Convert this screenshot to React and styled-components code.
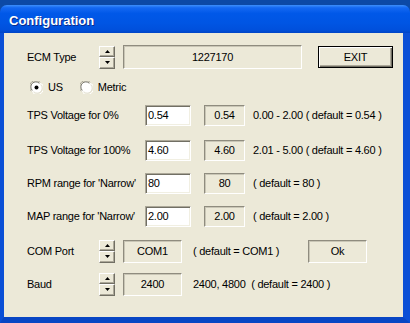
import styled, { createGlobalStyle } from "styled-components";

const GlobalStyle = createGlobalStyle`
  html, body { margin: 0; padding: 0; }
  body {
    width: 410px;
    height: 323px;
    overflow: hidden;
    background: #0c49a6;
    font-family: "Liberation Sans", Arial, sans-serif;
  }
`;

const Window = styled.div`
  margin-top: 5px;
  width: 410px;
  height: 318px;
  display: flex;
  flex-direction: column;
`;

const TitleBar = styled.div`
  height: 28px;
  flex: none;
  box-sizing: border-box;
  border-radius: 7px 7px 0 0;
  background: linear-gradient(
    to bottom,
    #3d8ffc 0%,
    #1468f2 10%,
    #0058e8 30%,
    #0055e3 65%,
    #0050dc 88%,
    #0045c6 100%
  );
  display: flex;
  align-items: center;
  padding: 3px 0 0 9px;
  color: #fff;
  font-weight: bold;
  font-size: 13px;
  text-shadow: 1px 1px 0 #0b2b8c;
`;

const Frame = styled.div`
  flex: 1;
  box-sizing: border-box;
  background: #ece9d8;
  border-left: 4px solid #0a4fd6;
  border-right: 7px solid #0a4fd6;
  border-bottom: 6px solid #0846c4;
  padding: 12px 0 0 23px;
  font-size: 11px;
  letter-spacing: -0.25px;
  color: #000;
`;

const Row = styled.div`
  display: flex;
  align-items: center;
  height: 24px;
  margin-top: ${(p) => p.$mt || 0}px;
`;

const Label = styled.div`
  width: ${(p) => p.$w}px;
  flex: none;
  white-space: nowrap;
`;

const Spinner = styled.div`
  width: 16px;
  height: 23px;
  flex: none;
  display: flex;
  flex-direction: column;
  margin-right: 8px;
`;

const SpinBtn = styled.div`
  flex: 1;
  box-sizing: border-box;
  background: #ece9d8;
  border: 1px solid;
  border-color: #fff #716f64 #716f64 #fff;
  box-shadow: inset -1px -1px 0 #aca899;
  display: flex;
  align-items: center;
  justify-content: center;
`;

const Display = styled.div`
  width: ${(p) => p.$w}px;
  height: ${(p) => p.$h || 21}px;
  flex: none;
  box-sizing: border-box;
  border: 1px solid;
  border-color: #8f8c7f #fff #fff #8f8c7f;
  box-shadow: inset 1px 1px 0 #c9c6b6;
  display: flex;
  align-items: center;
  justify-content: center;
  margin-left: ${(p) => p.$ml || 0}px;
`;

const Input = styled.div`
  width: 46px;
  height: 21px;
  flex: none;
  box-sizing: border-box;
  background: #fff;
  border: 1px solid;
  border-color: #aca899 #fff #fff #aca899;
  box-shadow: inset 1px 1px 0 #716f64, inset -1px -1px 0 #f1efe2;
  display: flex;
  align-items: center;
  padding: 0 0 1px 2px;
`;

const Note = styled.div`
  margin-left: ${(p) => p.$ml}px;
  width: ${(p) => (p.$w ? `${p.$w}px` : "auto")};
  flex: none;
  white-space: pre;
`;

const Button = styled.div`
  width: 75px;
  height: 22px;
  flex: none;
  box-sizing: border-box;
  margin-left: 16px;
  border: 1px solid #000;
  box-shadow: inset 1px 1px 0 #fff, inset -1px -1px 0 #716f64,
    inset -2px -2px 0 #aca899;
  display: flex;
  align-items: center;
  justify-content: center;
`;

const RadioGroup = styled.div`
  display: flex;
  align-items: center;
  margin-left: 3px;
`;

const RadioItem = styled.div`
  display: flex;
  align-items: center;
  gap: 5px;
  margin-right: ${(p) => p.$mr || 0}px;
`;

const Arrow = ({ down }) => (
  <svg width="5" height="3" viewBox="0 0 5 3">
    <polygon points={down ? "0,0 5,0 2.5,3" : "2.5,0 5,3 0,3"} fill="#000" />
  </svg>
);

const Spin = () => (
  <Spinner>
    <SpinBtn>
      <Arrow />
    </SpinBtn>
    <SpinBtn>
      <Arrow down />
    </SpinBtn>
  </Spinner>
);

const RadioDot = ({ checked }) => (
  <svg width="13" height="13" viewBox="0 0 13 13">
    <circle cx="6.5" cy="6.5" r="6" fill="#fff" />
    <path d="M1.3 10.2 A6 6 0 0 1 10.2 1.3" stroke="#aca899" strokeWidth="1" fill="none" />
    <path d="M2.3 9.4 A5 5 0 0 1 9.4 2.3" stroke="#716f64" strokeWidth="1" fill="none" />
    <path d="M11.7 2.8 A6 6 0 0 1 2.8 11.7" stroke="#fff" strokeWidth="1" fill="none" />
    <path d="M10.7 3.6 A5 5 0 0 1 3.6 10.7" stroke="#e2dfd0" strokeWidth="1" fill="none" />
    {checked && <circle cx="6.5" cy="6.5" r="2" fill="#000" />}
  </svg>
);

const ranges = [
  { label: "TPS Voltage for 0%", value: "0.54", note: "0.00 - 2.00 ( default = 0.54 )", mt: 4 },
  { label: "TPS Voltage for 100%", value: "4.60", note: "2.01 - 5.00 ( default = 4.60 )", mt: 11 },
  { label: "RPM range for 'Narrow'", value: "80", note: "( default = 80 )", mt: 9 },
  { label: "MAP range for 'Narrow'", value: "2.00", note: "( default = 2.00 )", mt: 9 },
];

function App() {
  return (
    <>
      <GlobalStyle />
      <Window>
        <TitleBar>Configuration</TitleBar>
        <Frame>
          <Row>
            <Label $w={72}>ECM Type</Label>
            <Spin />
            <Display $w={179} $h={24}>1227170</Display>
            <Button>EXIT</Button>
          </Row>
          <Row $mt={6}>
            <RadioGroup>
              <RadioItem $mr={17}>
                <RadioDot checked />
                US
              </RadioItem>
              <RadioItem>
                <RadioDot />
                Metric
              </RadioItem>
            </RadioGroup>
          </Row>
          {ranges.map((r) => (
            <Row key={r.label} $mt={r.mt}>
              <Label $w={118}>{r.label}</Label>
              <Input>{r.value}</Input>
              <Display $w={41} $ml={13}>{r.value}</Display>
              <Note $ml={8}>{r.note}</Note>
            </Row>
          ))}
          <Row $mt={11}>
            <Label $w={72}>COM Port</Label>
            <Spin />
            <Display $w={59} $h={23}>COM1</Display>
            <Note $ml={11} $w={115}>( default = COM1 )</Note>
            <Display $w={59} $h={23}>Ok</Display>
          </Row>
          <Row $mt={9}>
            <Label $w={72}>Baud</Label>
            <Spin />
            <Display $w={59} $h={23}>2400</Display>
            <Note $ml={11}>2400, 4800  ( default = 2400 )</Note>
          </Row>
        </Frame>
      </Window>
    </>
  );
}

export default App;
